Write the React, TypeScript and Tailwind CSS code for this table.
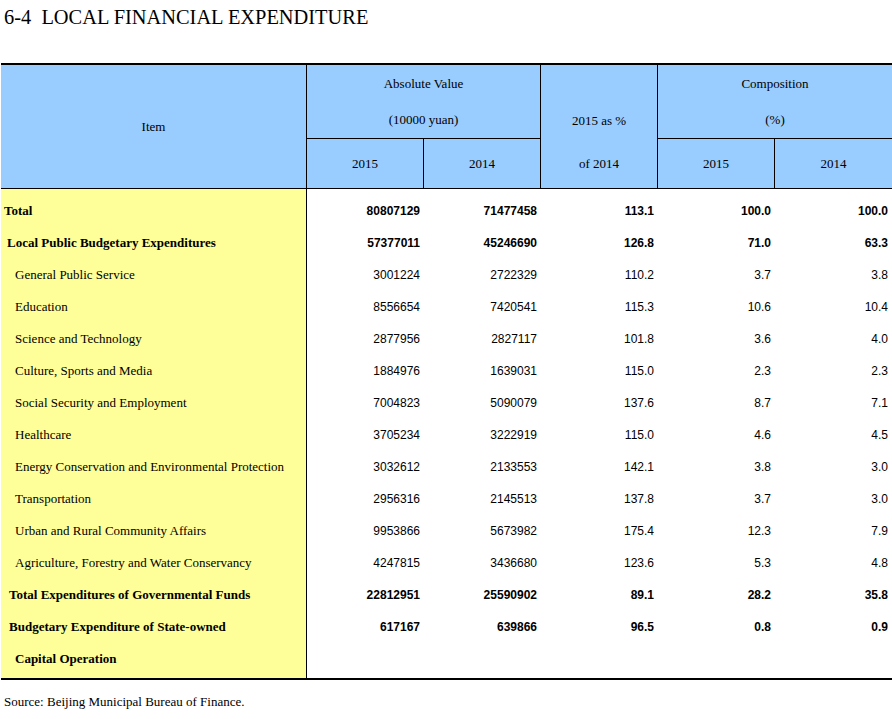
import React from "react";

type Row = {
  label: string;
  indent: string;
  bold?: boolean;
  values: string[];
};

const rows: Row[] = [
  { label: "Total", indent: "pl-[3px]", bold: true, values: ["80807129", "71477458", "113.1", "100.0", "100.0"] },
  { label: "Local Public Budgetary Expenditures", indent: "pl-[6px]", bold: true, values: ["57377011", "45246690", "126.8", "71.0", "63.3"] },
  { label: "General Public Service", indent: "pl-[14px]", values: ["3001224", "2722329", "110.2", "3.7", "3.8"] },
  { label: "Education", indent: "pl-[14px]", values: ["8556654", "7420541", "115.3", "10.6", "10.4"] },
  { label: "Science and Technology", indent: "pl-[14px]", values: ["2877956", "2827117", "101.8", "3.6", "4.0"] },
  { label: "Culture, Sports and Media", indent: "pl-[14px]", values: ["1884976", "1639031", "115.0", "2.3", "2.3"] },
  { label: "Social Security and Employment", indent: "pl-[14px]", values: ["7004823", "5090079", "137.6", "8.7", "7.1"] },
  { label: "Healthcare", indent: "pl-[14px]", values: ["3705234", "3222919", "115.0", "4.6", "4.5"] },
  { label: "Energy Conservation and Environmental Protection", indent: "pl-[14px]", values: ["3032612", "2133553", "142.1", "3.8", "3.0"] },
  { label: "Transportation", indent: "pl-[14px]", values: ["2956316", "2145513", "137.8", "3.7", "3.0"] },
  { label: "Urban and Rural Community Affairs", indent: "pl-[14px]", values: ["9953866", "5673982", "175.4", "12.3", "7.9"] },
  { label: "Agriculture, Forestry and Water Conservancy", indent: "pl-[14px]", values: ["4247815", "3436680", "123.6", "5.3", "4.8"] },
  { label: "Total Expenditures of Governmental Funds", indent: "pl-[8px]", bold: true, values: ["22812951", "25590902", "89.1", "28.2", "35.8"] },
  { label: "Budgetary Expenditure of State-owned", indent: "pl-[8px]", bold: true, values: ["617167", "639866", "96.5", "0.8", "0.9"] },
  { label: "Capital Operation", indent: "pl-[14px]", bold: true, values: ["", "", "", "", ""] },
];

const serif = "font-['Liberation_Serif','Times_New_Roman',serif]";
const sans = "font-['Liberation_Sans',Arial,sans-serif]";

export default function App() {
  return (
    <div className={`w-[892px] bg-white text-black ${serif}`}>
      <div className="h-[63px] pl-[4px]">
        <h1 className="text-[20.4px] leading-[34px] whitespace-pre">6-4  LOCAL FINANCIAL EXPENDITURE</h1>
      </div>

      <div className="ml-px border-t-2 border-b-2 border-black">
        <table className="w-[891px] table-fixed border-separate border-spacing-0 text-[13px]">
          <colgroup>
            <col className="w-[306px]" />
            <col className="w-[117px]" />
            <col className="w-[117px]" />
            <col className="w-[117px]" />
            <col className="w-[117px]" />
            <col />
          </colgroup>
          <thead>
            <tr className="h-[74px]">
              <th rowSpan={2} className="bg-[#99ccff] border-r border-b border-black font-normal align-middle">
                Item
              </th>
              <th colSpan={2} className="bg-[#99ccff] border-r border-b border-black font-normal align-top p-0">
                <div className="h-[37px] leading-[37px]">Absolute Value</div>
                <div className="h-[36px] leading-[36px]">(10000 yuan)</div>
              </th>
              <th rowSpan={2} className="bg-[#99ccff] border-r border-b border-black font-normal align-top p-0">
                <div className="h-[37px]" />
                <div className="h-[37px] leading-[37px]">2015 as %</div>
                <div className="h-[49px] leading-[49px]">of 2014</div>
              </th>
              <th colSpan={2} className="bg-[#99ccff] border-b border-black font-normal align-top p-0">
                <div className="h-[37px] leading-[37px]">Composition</div>
                <div className="h-[36px] leading-[36px]">(%)</div>
              </th>
            </tr>
            <tr className="h-[50px]">
              <th className="bg-[#99ccff] border-r border-b border-black font-normal">2015</th>
              <th className="bg-[#99ccff] border-r border-b border-black font-normal">2014</th>
              <th className="bg-[#99ccff] border-r border-b border-black font-normal">2015</th>
              <th className="bg-[#99ccff] border-b border-black font-normal">2014</th>
            </tr>
          </thead>
          <tbody>
            {rows.map((row, i) => {
              const first = i === 0;
              const last = i === rows.length - 1;
              const rowH = first ? "h-[38px]" : last ? "h-[35px]" : "h-[32px]";
              const pad = first ? "pt-[6px]" : last ? "pb-[3px]" : "";
              return (
                <tr key={row.label} className={rowH}>
                  <td
                    className={`bg-[#ffff99] border-r border-black whitespace-nowrap ${row.indent} ${pad} ${
                      row.bold ? "font-bold" : ""
                    }`}
                  >
                    {row.label}
                  </td>
                  {row.values.map((v, j) => (
                    <td
                      key={j}
                      className={`text-right pr-[4px] text-[12px] ${sans} ${pad} ${row.bold ? "font-bold" : ""}`}
                    >
                      {v}
                    </td>
                  ))}
                </tr>
              );
            })}
          </tbody>
        </table>
      </div>

      <p className="pl-[4px] mt-[14px] text-[13px] leading-[16px]">Source: Beijing Municipal Bureau of Finance.</p>
    </div>
  );
}
